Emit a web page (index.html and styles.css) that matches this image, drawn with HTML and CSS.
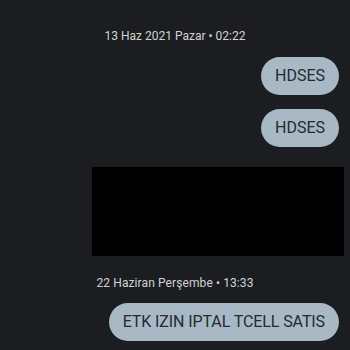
FILE: index.html
```html
<!DOCTYPE html>
<html lang="tr">
<head>
	<meta charset="UTF-8">
	<title>mesajlar</title>
	<link rel="stylesheet" href="styles.css">
</head>
<body>
	<div class="chat">
		<div class="date first">13 Haz 2021 Pazar • 02:22</div>
		<div class="msg">HDSES</div>
		<div class="msg">HDSES</div>
		<div class="media"></div>
		<div class="date second">22 Haziran Perşembe • 13:33</div>
		<div class="msg long">ETK IZIN IPTAL TCELL SATIS</div>
	</div>
</body>
</html>
```

FILE: styles.css
```css
html,body{
	margin: 0;
	padding: 0;
	background-color: #1b1d20;
}
.chat{
	width: 350px;
	height: 350px;
	overflow: hidden;
	display: flex;
	flex-direction: column;
	align-items: flex-end;
	font-family: Roboto, "Noto Sans", sans-serif;
}
.chat > div{
	flex-shrink: 0;
}
.date{
	align-self: center;
	height: 16px;
	line-height: 16px;
	font-size: 12px;
	color: #d2d3d5;
	margin-top: 18px;
	margin-bottom: 13px;
}
.first{
	margin-top: 28px;
}
.second{
	letter-spacing: 0.1px;
	margin-top: 19px;
	margin-bottom: 12px;
}
.msg{
	height: 38px;
	line-height: 38px;
	padding: 0 14px;
	margin-right: 11px;
	margin-bottom: 14px;
	border-radius: 19px;
	background-color: #a8b8c4;
	color: #1f2a33;
	font-size: 16px;
}
.long{
	letter-spacing: -0.1px;
}
.media{
	width: 252px;
	height: 89px;
	margin-top: 6px;
	margin-right: 6px;
	background-color: #000;
}
```
